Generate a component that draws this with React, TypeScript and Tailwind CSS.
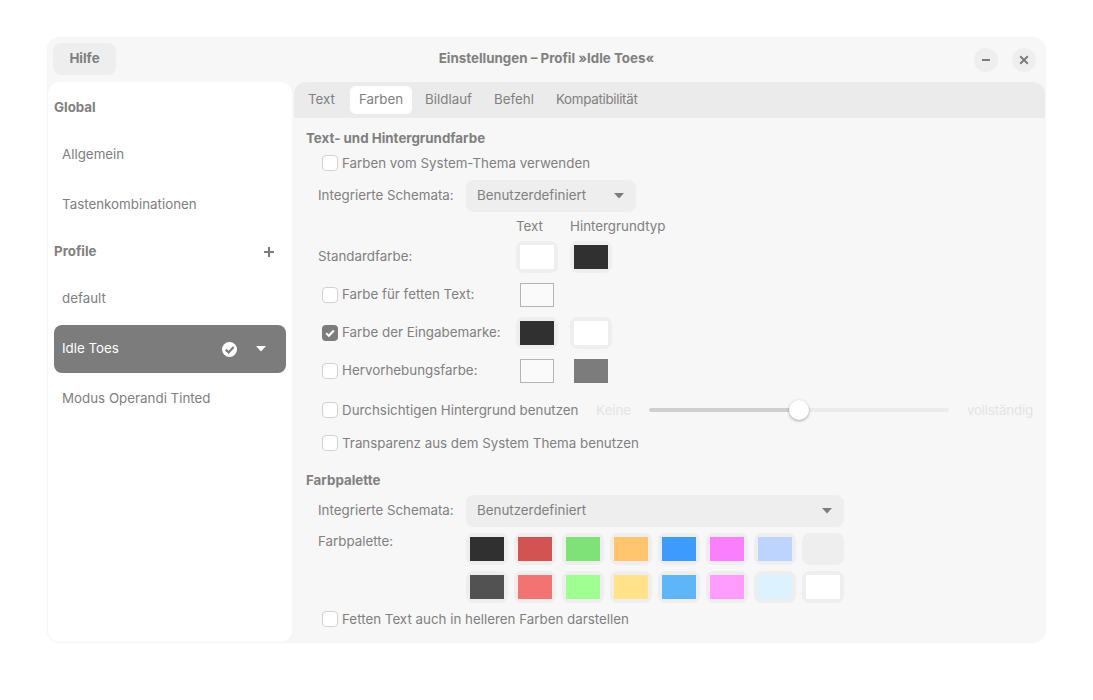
const font = { fontFamily: "Inter, 'Noto Sans', sans-serif" };

const palette = [
  ["#303030", "#d35353", "#7fe278", "#ffc66d", "#3d9bff", "#f97fff", "#bdd4ff", "#efefef"],
  ["#525252", "#f37272", "#9fff91", "#ffe28a", "#5eb6f9", "#ff9dff", "#dcf3ff", "#ffffff"],
];

function Check({ checked }: { checked?: boolean }) {
  return checked ? (
    <span className="w-4 h-4 rounded-[4px] bg-[#7c7c7c] flex items-center justify-center shrink-0">
      <svg width="12" height="12" viewBox="0 0 12 12" fill="none">
        <path d="M2.2 6.2L4.9 8.8L9.8 3.5" stroke="#fff" strokeWidth="2.2" />
      </svg>
    </span>
  ) : (
    <span className="w-4 h-4 rounded-[4px] bg-white border border-[#d2d2d2] shrink-0" />
  );
}

function CheckRow({ label, checked, tight, className = "" }: { label: string; checked?: boolean; tight?: boolean; className?: string }) {
  return (
    <div className={`flex items-center gap-[4px] pl-[16px] ${className}`}>
      <Check checked={checked} />
      <span className={tight ? "pb-[1px]" : "pt-[1px]"}>{label}</span>
    </div>
  );
}

function Caret({ color = "#7c7c7c" }: { color?: string }) {
  return (
    <svg width="10" height="6" viewBox="0 0 10 6">
      <path d="M0 0H10L5 5.5Z" fill={color} />
    </svg>
  );
}

function Swatch({ color, button, plain }: { color: string; button?: boolean; plain?: boolean }) {
  if (button) {
    return (
      <div className="w-[42px] h-[32px] rounded-[8px] bg-[#eeeeee] flex items-center justify-center shrink-0">
        {!plain && <div className="w-[34px] h-[24px]" style={{ background: color }} />}
      </div>
    );
  }
  return (
    <div className="w-[42px] h-[32px] flex items-center justify-center shrink-0">
      <div
        className={`w-[34px] h-[24px] ${color === "#fafafa" ? "border border-[#b4b4b4]" : ""}`}
        style={{ background: color }}
      />
    </div>
  );
}

function Select({ className }: { className: string }) {
  return (
    <div className={`h-[32px] rounded-[8px] bg-[#eeeeee] flex items-center justify-between pl-[11px] pr-[12px] ${className}`}>
      <span className="pb-[2px]">Benutzerdefiniert</span>
      <Caret />
    </div>
  );
}

function SideItem({ label }: { label: string }) {
  return <div className="h-[48px] flex items-center pl-[8px] pb-[2px]">{label}</div>;
}

export default function App() {
  return (
    <div className="h-[700px] bg-white pt-[37px] pl-[47px] text-[13.35px] text-[#808080]" style={font}>
      <div className="w-[999px] h-[606px] rounded-[14px] bg-[#f7f7f7] flex flex-col px-px pb-px shadow-[0_0_1px_rgba(0,0,0,0.08)]">
        <header className="h-[45px] shrink-0 relative flex items-center justify-between pl-[5px] pr-[9px]">
          <button className="h-[32px] w-[63px] rounded-[8px] bg-[#eeeeee] font-bold mt-[-2px]">Hilfe</button>
          <div className="absolute inset-x-0 top-[11px] text-center font-bold">Einstellungen – Profil »Idle Toes«</div>
          <div className="flex gap-[14px]">
            <span className="w-[24px] h-[24px] rounded-full bg-[#eeeeee] flex items-center justify-center">
              <svg width="10" height="10" viewBox="0 0 10 10">
                <path d="M1 4H9V6H1Z" fill="#7c7c7c" />
              </svg>
            </span>
            <span className="w-[24px] h-[24px] rounded-full bg-[#eeeeee] flex items-center justify-center">
              <svg width="10" height="10" viewBox="0 0 10 10" fill="none">
                <path d="M1.2 1.2L8.8 8.8M8.8 1.2L1.2 8.8" stroke="#7c7c7c" strokeWidth="2" />
              </svg>
            </span>
          </div>
        </header>

        <div className="flex-1 flex gap-[2px] min-h-0">
          <aside className="w-[244px] shrink-0 rounded-[12px] bg-white px-[6px] pt-[1px]">
            <div className="h-[48px] flex items-center font-bold">Global</div>
            <div className="flex flex-col gap-[2px]">
              <SideItem label="Allgemein" />
              <SideItem label="Tastenkombinationen" />
            </div>
            <div className="h-[46px] flex items-center justify-between font-bold pr-[11px]">
              <span className="pb-[2px]">Profile</span>
              <svg width="12" height="12" viewBox="0 0 12 12">
                <path d="M5 1H7V5H11V7H7V11H5V7H1V5H5Z" fill="#7c7c7c" />
              </svg>
            </div>
            <div className="flex flex-col gap-[2px]">
              <SideItem label="default" />
              <div className="h-[48px] rounded-[8px] bg-[#7c7c7c] text-white flex items-center justify-between pl-[8px] pr-[19px]">
                <span className="pb-[2px]">Idle Toes</span>
                <div className="flex items-center gap-[19px] pr-[1px]">
                  <svg width="15" height="15" viewBox="0 0 15 15">
                    <circle cx="7.5" cy="7.5" r="7.5" fill="#fff" />
                    <path d="M3.8 7.6L6.6 10.4L11.6 5" fill="none" stroke="#7c7c7c" strokeWidth="2.2" />
                  </svg>
                  <Caret color="#fff" />
                </div>
              </div>
              <SideItem label="Modus Operandi Tinted" />
            </div>
          </aside>

          <main className="flex-1 min-w-0 flex flex-col">
            <nav className="h-[36px] shrink-0 rounded-t-[12px] bg-[#ebebeb] flex items-center pl-[5px] gap-[4px]">
              {["Text", "Farben", "Bildlauf", "Befehl"].map((tab) => (
                <span
                  key={tab}
                  className={`h-[28px] px-[9px] pb-[2px] rounded-[6px] flex items-center ${tab === "Farben" ? "bg-white ml-[2px]" : ""}`}
                >
                  {tab}
                </span>
              ))}
              <span className="h-[28px] px-[9px] pb-[2px] flex items-center tracking-[-0.3px]">Kompatibilität</span>
            </nav>

            <section className="pl-[12px] pt-[7px]">
              <h2 className="h-[26px] flex items-center font-bold">Text- und Hintergrundfarbe</h2>
              <CheckRow label="Farben vom System-Thema verwenden" className="h-[24px]" />
              <div className="flex items-center pl-[12px] mt-[5px]">
                <span className="w-[148px] pb-[2px]">Integrierte Schemata:</span>
                <Select className="w-[170px]" />
              </div>
              <div className="flex h-[26px] items-center pl-[210px] pt-[2px]">
                <span className="w-[54px]">Text</span>
                <span>Hintergrundtyp</span>
              </div>
              <div className="h-[38px] flex items-center pl-[12px]">
                <span className="w-[198px] pb-[2px]">Standardfarbe:</span>
                <div className="flex gap-[12px]">
                  <Swatch button color="#ffffff" />
                  <Swatch button color="#303030" />
                </div>
              </div>
              <div className="h-[38px] flex items-center">
                <CheckRow label="Farbe für fetten Text:" tight className="w-[210px]" />
                <Swatch color="#fafafa" />
              </div>
              <div className="h-[38px] flex items-center">
                <CheckRow label="Farbe der Eingabemarke:" tight checked className="w-[210px]" />
                <div className="flex gap-[12px]">
                  <Swatch button color="#303030" />
                  <Swatch button color="#ffffff" />
                </div>
              </div>
              <div className="h-[38px] flex items-center">
                <CheckRow label="Hervorhebungsfarbe:" tight className="w-[210px]" />
                <div className="flex gap-[12px]">
                  <Swatch color="#fafafa" />
                  <Swatch color="#7c7c7c" />
                </div>
              </div>
              <div className="h-[40px] flex items-center">
                <CheckRow label="Durchsichtigen Hintergrund benutzen" className="w-[290px]" />
                <span className="w-[53px] text-[#e4e4e4]">Keine</span>
                <div className="relative w-[300px] h-[4px] rounded-full bg-[#ebebeb]">
                  <div className="w-[150px] h-[4px] rounded-full bg-[#cfcfcf]" />
                  <div className="absolute left-[140px] top-[-8px] w-[20px] h-[20px] rounded-full bg-white shadow-[0_1px_3px_rgba(0,0,0,0.35)]" />
                </div>
                <span className="ml-[18px] text-[#e4e4e4] tracking-[-0.2px]">vollständig</span>
              </div>
              <CheckRow label="Transparenz aus dem System Thema benutzen" className="h-[26px]" />

              <h2 className="h-[26px] mt-[11px] flex items-center font-bold">Farbpalette</h2>
              <div className="flex items-center pl-[12px] mt-[2px]">
                <span className="w-[148px] pb-[2px]">Integrierte Schemata:</span>
                <Select className="w-[378px]" />
              </div>
              <div className="flex pl-[12px] mt-[6px]">
                <span className="w-[148px] leading-[16px]">Farbpalette:</span>
                <div className="flex flex-col gap-[6px]">
                  {palette.map((row, i) => (
                    <div key={i} className="flex gap-[6px]">
                      {row.map((color, j) => (
                        <Swatch key={j} button color={color} plain={i === 0 && j === 7} />
                      ))}
                    </div>
                  ))}
                </div>
              </div>
              <CheckRow label="Fetten Text auch in helleren Farben darstellen" className="h-[32px]" />
            </section>
          </main>
        </div>
      </div>
    </div>
  );
}
